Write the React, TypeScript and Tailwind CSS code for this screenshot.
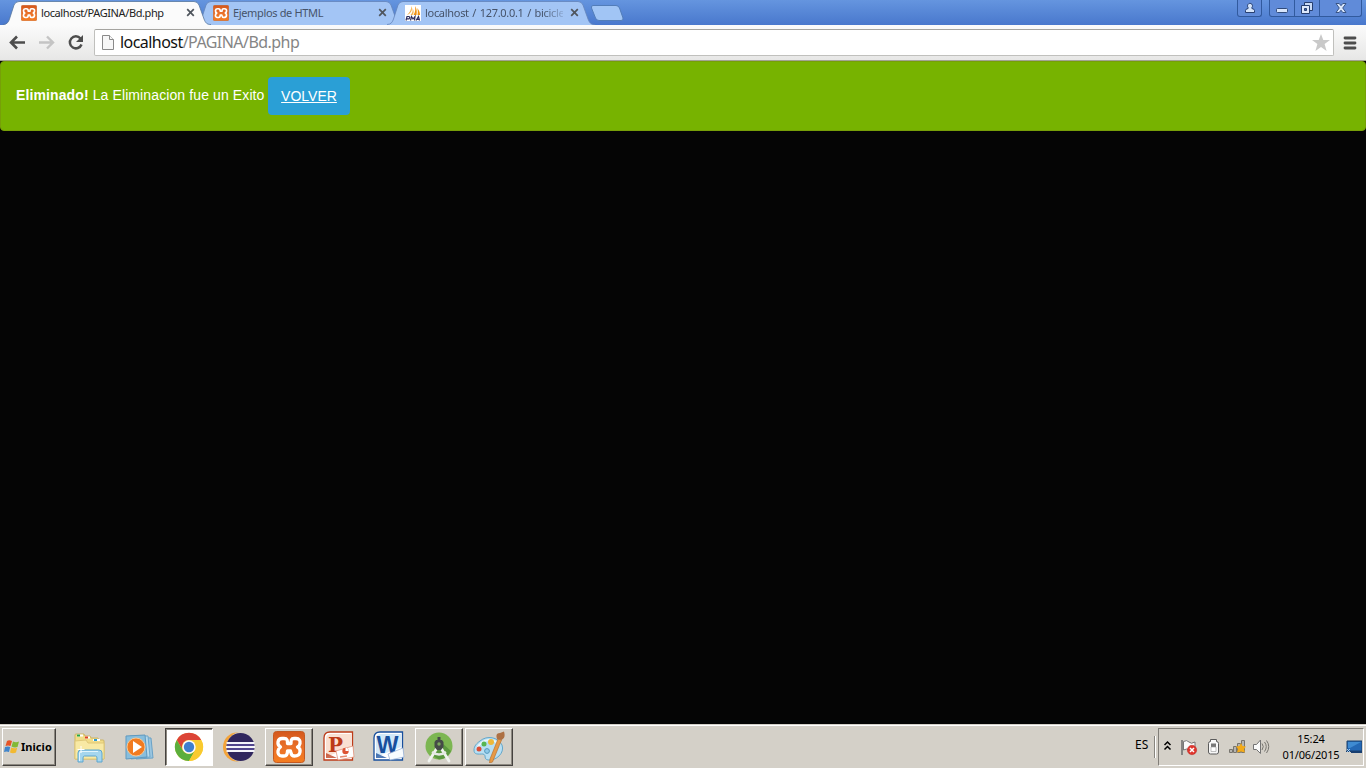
import type { ReactNode } from "react";

const UI = "font-['Noto_Sans','Liberation_Sans',sans-serif]";

function XamppIcon({ className }: { className: string }) {
  return (
    <svg viewBox="0 0 32 32" className={className}>
      <defs>
        <linearGradient id="xo" x1="0" y1="0" x2="0" y2="1">
          <stop offset="0" stopColor="#d4571b" />
          <stop offset="0.5" stopColor="#e9702a" />
          <stop offset="1" stopColor="#f57d1f" />
        </linearGradient>
      </defs>
      <rect x="0.5" y="0.5" width="31" height="31" rx="3" fill="url(#xo)" stroke="#c45a22" />
      <path
        d="M9 7.500H11C14.500 7.500 14.500 9.500 14.500 12.500H18C18 9.500 18 7.500 21 7.500H23C26.500 7.500 27.500 10 27 12.500C26.700 14.300 25.500 15.500 24.500 16C26.500 17 27.500 18.500 27 21C26.500 24 25 25 21.500 25C18 25 18 22.500 17.500 20H14.500C14.500 22.500 14 25 11 25H9C5.500 25 4.700 22 5 20C5.300 18 6.500 16.700 7.500 16C5.500 15 4.700 13.500 5 11C5.400 8.500 7 7.500 9 7.500Z"
        fill="none"
        stroke="#fff"
        strokeWidth="3.3"
        strokeLinejoin="round"
      />
    </svg>
  );
}

function PmaIcon() {
  return (
    <svg viewBox="0 0 16 16" className="size-4 shrink-0">
      <rect width="16" height="16" fill="#fff" />
      <path d="M6.500 1C7.500 4 7 8 2 10C5 7 6 5 6.500 1ZM7.500 3C9 6 9 8 7.500 10H5.500C7.500 8 8 6 7.500 3Z" fill="#f6b04b" />
      <path d="M10 1C12 4 12 7 11.500 10H8.500C10.500 7 10.500 4 10 1ZM12 3C14 5 15 7 15 10H12.500C13 7 13 5 12 3Z" fill="#f29111" />
      <path d="M1 15.500L2 11.500H3.800Q5.500 12 4 13.800H1.800M5.500 15.500L6.500 11.500L8 14L10 11.500L9.500 15.500M11 15.500L13.500 11.500L14.500 15.500M12 14.300H14.300" fill="none" stroke="#2f2f60" strokeWidth="1.2" />
    </svg>
  );
}

function Tab({ title, icon, active, fit, fade }: { title: string; icon: ReactNode; active?: boolean; fit: string; fade?: boolean }) {
  return (
    <div className={`relative flex h-[25px] w-48 shrink-0 items-center ${active ? "z-10" : "z-0"}`}>
      <svg viewBox="0 0 208 25" className="absolute -left-[9px] top-0 h-[25px] w-[208px]">
        <path
          d="M0 25C4 24.500 5.500 22 6.500 19L11 5Q12.500 1.500 16 1.500H191Q194.500 1.500 196 5L201 19C202.500 23 204 24.500 208 25Z"
          fill={active ? "#fbfbfb" : "#a3c5f5"}
        />
        <path
          d="M0 24.500C4 24.500 5.500 22 6.500 19L11 5Q12.500 1.500 16 1.500H191Q194.500 1.500 196 5L201 19C202.500 23 204 24.500 208 24.500"
          fill="none"
          stroke={active ? "#56779e" : "#6485ba"}
          strokeWidth="1"
          opacity="0.8"
        />
      </svg>
      <div className="relative flex w-full items-center pl-[9px]">
        {icon}
        <span
          className={`ml-1 w-[138px] shrink-0 whitespace-nowrap text-[11px] leading-4 ${fit} ${UI} ${
            active ? "text-[#222]" : "text-[#46536a]"
          } ${fade ? "[mask-image:linear-gradient(to_right,black_118px,transparent_143px)]" : ""}`}
        >
          {title}
        </span>
        <svg viewBox="0 0 9 9" className="ml-[7px] size-[9px] shrink-0">
          <path d="M1.200 1.200L7.800 7.800M7.800 1.200L1.200 7.800" stroke="#4f555d" strokeWidth="1.7" />
        </svg>
      </div>
    </div>
  );
}

function WindowControls() {
  return (
    <div className="ml-auto flex h-[17px] items-start gap-[7px] pr-[4px]">
      <div className="flex h-[17px] w-[25px] items-center justify-center rounded-b-[3px] border border-t-0 border-[#315a9e] bg-[#608bd9]">
        <svg viewBox="0 0 12 12" className="size-3">
          <path d="M3.500 3.800A2.500 2.500 0 1 1 7.900 5.500V6.500Q10.500 7 10.500 8.500V10.500H1.500V8.500Q1.500 7 4.100 6.500V5.500Q3.500 5 3.500 3.800Z" fill="#d5e4fa" stroke="#273f70" />
        </svg>
      </div>
      <div className="flex h-[17px] w-[93px] rounded-b-[3px] border border-t-0 border-[#315a9e] bg-[#608bd9]">
        <div className="flex w-[25px] items-center justify-center border-r border-[#315a9e]">
          <svg viewBox="0 0 14 12" className="h-3 w-3.5">
            <rect x="1.500" y="6.500" width="11" height="4" rx="1" fill="#d8e6fc" stroke="#304b7b" />
          </svg>
        </div>
        <div className="flex w-[25px] items-center justify-center border-r border-[#315a9e]">
          <svg viewBox="0 0 14 14" className="size-3.5" fill="#c9dbf6" stroke="#263f70">
            <path d="M4.500 1.500H12.500V9.500H4.500Z" />
            <path d="M1.500 4.500H9.500V12.500H1.500Z" fill="#dce8fb" />
            <path d="M4.500 7.500H6.500V9.500H4.500Z" fill="#416ab0" />
          </svg>
        </div>
        <div className="flex flex-1 items-center justify-center">
          <svg viewBox="0 0 14 12" className="h-3 w-3.5">
            <path d="M2 1.500H5.200L7 3.700L8.800 1.500H12L8.700 6L12 10.500H8.800L7 8.200L5.200 10.500H2L5.300 6Z" fill="#d8e6fc" stroke="#304b7b" strokeWidth="0.900" />
          </svg>
        </div>
      </div>
    </div>
  );
}

function Toolbar() {
  return (
    <div className="flex h-9 items-start border-b border-[#a2a296] bg-gradient-to-b from-[#fbfbfb] to-[#e7e7e6]">
      <svg viewBox="0 0 94 36" className="h-9 w-[94px] shrink-0" fill="none">
        <path d="M25 17.500H12M17 11.500L11 17.500L17 23.500" stroke="#4d4d4d" strokeWidth="2.600" />
        <path d="M39 17.500H52M47 11.500L53 17.500L47 23.500" stroke="#c4c4c4" strokeWidth="2.400" />
        <path d="M80.500 13.500A6 6 0 1 0 81.500 19.500" stroke="#4d4d4d" strokeWidth="2.500" />
        <path d="M83 10V17H76Z" fill="#4d4d4d" />
      </svg>
      <div className="mt-[4px] flex h-[27px] w-[1240px] shrink-0 items-center rounded-[2px] border border-[#c0c0bd] border-t-[#a5a4a0] bg-white">
        <svg viewBox="0 0 12 15" className="ml-[7px] h-[15px] w-3" fill="#f7f7f7" stroke="#8a8a8a">
          <path d="M0.500 0.500H7.500L11.500 4.500V14.500H0.500Z" />
          <path d="M7.500 0.500V4.500H11.500" />
        </svg>
        <span className={`ml-[6px] -translate-y-px whitespace-nowrap text-[16px] leading-6 tracking-[-0.55px] text-[#858585] ${UI}`}>
          <span className="text-[#111]">localhost</span>/PAGINA/Bd.php
        </span>
        <svg viewBox="0 0 18 17" className="ml-auto mr-[3px] h-[17px] w-[18px]">
          <path d="M9 0L11.300 6H18L12.600 10L14.600 17L9 12.900L3.400 17L5.400 10L0 6H6.700Z" fill="#c9c9c9" />
        </svg>
      </div>
      <svg viewBox="0 0 14 14" className="ml-[9px] mt-[11px] h-3.5 w-3.5 shrink-0">
        <path d="M2 2H12M2 7H12M2 12H12" stroke="#4d4d4d" strokeWidth="2.800" strokeLinecap="round" />
      </svg>
    </div>
  );
}

function TaskButton({ kind, children }: { kind?: "raised" | "pressed"; children: ReactNode }) {
  const look =
    kind === "raised"
      ? "border-t-white border-l-white border-b-[#45423f] border-r-[#45423f] shadow-[inset_-1px_-1px_#8c8880]"
      : kind === "pressed"
        ? "border-t-[#45423f] border-l-[#45423f] border-b-white border-r-white bg-white shadow-[inset_1px_1px_#8c8880]"
        : "border-transparent";
  return <div className={`flex h-[38px] w-12 shrink-0 items-center justify-center border ${look}`}>{children}</div>;
}

function FolderIcon() {
  return (
    <svg viewBox="0 0 32 32" className="size-8">
      <path d="M2 4Q2 3 3 3H11L12 5H17L18 7H25L26 9H30Q31 9 31 10V28H2Z" fill="#f1dc87" stroke="#ceb566" />
      <path d="M4 4.500H10M12 6.500H17M20 9H27" stroke="#fff" strokeWidth="2" />
      <path d="M4 4.500H7" stroke="#25a547" strokeWidth="2" />
      <path d="M12 6.500H15" stroke="#df4325" strokeWidth="2" />
      <path d="M21 9H24" stroke="#2e9bd0" strokeWidth="2" />
      <path d="M2 10L13 9L15 12H31V28H2Z" fill="#f8e9a4" stroke="#dfc878" />
      <path d="M5 31V22Q5 19 8 19H26Q29 19 29 22V31H24V27Q24 25 22.500 25H11.500Q10 25 10 27V31Z" fill="#a5d6ee" stroke="#5da6cf" />
      <path d="M6.500 30V22Q6.500 20.500 9 20.500H25" fill="none" stroke="#e2f5fc" />
      <path d="M8 15V22M4.500 18.500H11.500" stroke="#fff" />
    </svg>
  );
}

function PlayerIcon() {
  return (
    <svg viewBox="0 0 32 32" className="size-8">
      <path d="M10 6L28 7L30 27L13 28Z" fill="#9ac5df" stroke="#6aa2c7" />
      <path d="M7 5L25 5L27 26L8 28Z" fill="#b5d9eb" stroke="#6da7cb" />
      <path d="M3 5L22 4L24 26L3 28Z" fill="#87bedd" stroke="#6099bf" />
      <circle cx="13" cy="16" r="9" fill="#f17b20" stroke="#fbc68f" />
      <path d="M10 10L19 16L10 22Z" fill="#fff" />
    </svg>
  );
}

function ChromeIcon() {
  return (
    <svg viewBox="0 0 32 32" className="size-8">
      <circle cx="16" cy="16" r="14" fill="#ffd43b" />
      <path d="M3.800 9A14 14 0 0 1 28.200 9H16A7 7 0 0 0 9.900 19.500Z" fill="#dc4437" />
      <path d="M3.800 9A14 14 0 0 0 16 30L22 19.500A7 7 0 0 1 9.900 19.500Z" fill="#5bae3c" />
      <path d="M16 9H28.200A14 14 0 0 1 16 30L22 19.500Q25 14 16 9Z" fill="#f9ca2f" />
      <circle cx="16" cy="16" r="6.700" fill="#f8fafc" />
      <circle cx="16" cy="16" r="5.200" fill="#3f7fce" />
    </svg>
  );
}

function EclipseIcon() {
  return (
    <svg viewBox="0 0 32 32" className="size-8">
      <ellipse cx="14" cy="16" rx="14" ry="14.500" fill="#f4a43a" />
      <circle cx="18.500" cy="16" r="15" fill="#d4d0c8" />
      <circle cx="17.500" cy="16" r="14" fill="#30265e" />
      <path d="M4 11H31V21H4Z" fill="#51458d" />
      <path d="M3.500 12H31.500M3 16H32M3.500 20H31.500" stroke="#f4f4fb" strokeWidth="2" />
    </svg>
  );
}

function OfficeIcon({ letter, color, light }: { letter: string; color: string; light: string }) {
  return (
    <svg viewBox="0 0 32 32" className="size-8">
      <path d="M1 7Q1 1 7 1H29.500V29H1Z" fill="#fff" stroke={color} strokeWidth="1.300" />
      <path d="M3 8Q3 3 8 3H28V16L3 26Z" fill={light} />
      <path d="M3 22L14 27H3Z" fill={color} opacity="0.75" />
      {letter === "P" ? (
        <text x="5" y="21" fontSize="21" fontWeight="700" fontFamily="DejaVu Serif, serif" textLength="15" lengthAdjust="spacingAndGlyphs" fill={color}>
          P
        </text>
      ) : (
        <text x="3.500" y="22" fontSize="23" fontWeight="700" fontFamily="Liberation Sans, sans-serif" textLength="22" lengthAdjust="spacingAndGlyphs" fill={color}>
          W
        </text>
      )}
      {letter === "P" ? (
        <g>
          <path d="M13 20L30 15L31 26L15 29Z" fill="#fff" stroke="#e18a70" strokeWidth="0.700" />
          <circle cx="22.500" cy="20" r="3.200" fill="#dd5535" />
          <path d="M22.500 20V16.800A3.200 3.200 0 0 1 25.700 20Z" fill="#fff" />
          <path d="M17 26L24 25" stroke="#e48b70" strokeWidth="1.500" />
        </g>
      ) : (
        <path d="M15 23L30 17L31 26L17 29Z" fill="#f8fcff" stroke="#93aed4" strokeWidth="0.700" />
      )}
    </svg>
  );
}

function StudioIcon() {
  return (
    <svg viewBox="0 0 32 32" className="size-8">
      <circle cx="16" cy="15" r="13.500" fill="#7cb651" />
      <path d="M18 11L28 20Q24 28 16 28.500L10 25Z" fill="#5c9840" />
      <path d="M14 17L6 30M18 17L26 30" stroke="#f0f3ef" strokeWidth="2.800" strokeLinecap="round" />
      <path d="M9 21Q16 26 23 21" fill="none" stroke="#e5e9e4" strokeWidth="2.300" />
      <path d="M14.500 6H17.500V9H19L20.500 11V16L18 19H14L11.500 16V11L13 9H14.500Z" fill="#454b48" />
      <circle cx="16" cy="13" r="1.700" fill="#7aa85b" />
    </svg>
  );
}

function PaintIcon() {
  return (
    <svg viewBox="0 0 32 32" className="size-8">
      <path d="M7 10C14 4 25 6 29 14C32 22 23 30 15 29C10 28 14 24 10 23C5 23 1 24 1 19C1 15 4 12 7 10Z" fill="#b8dff3" stroke="#63a7ca" />
      <path d="M4 18Q7 10 16 9Q24 9 26 15" fill="none" stroke="#e8f8ff" strokeWidth="2" />
      <circle cx="6" cy="18" r="2.500" fill="#db4c35" />
      <circle cx="11" cy="13" r="2.500" fill="#57b652" />
      <circle cx="18" cy="11" r="3" fill="#edb93b" />
      <circle cx="14" cy="20" r="2.400" fill="#8fcaea" stroke="#5598bb" />
      <path d="M25 8L28.500 9L19.500 31L16.500 32L17 28Z" fill="#e79a46" stroke="#b87332" strokeWidth="0.700" />
      <path d="M24 8Q22 2 27 2L31 0.500Q33 7 28.500 9Z" fill="#ad7043" />
    </svg>
  );
}

function Tray() {
  return (
    <div className="ml-auto flex items-center">
      <span className={`mr-[4px] w-[15px] -translate-y-[2px] text-[12px] leading-4 text-black ${UI}`}>ES</span>
      <div className="mr-[2px] h-[22px] w-[2px] border-l border-r border-l-[#88857e] border-r-white" />
      <div className="mr-[2px] flex h-[38px] w-[206px] items-center border border-b-white border-l-[#817e78] border-r-white border-t-[#817e78]">
        <svg viewBox="0 0 114 36" className="h-9 w-[114px] shrink-0">
          <path d="M5.500 16L8.500 13L11.500 16M5.500 20.500L8.500 17.500L11.500 20.500" fill="none" stroke="#000" strokeWidth="1.500" />
          <path d="M23 11V26" stroke="#6b6b6b" strokeWidth="1.500" />
          <path d="M24.500 12.500Q28 10.500 30 13T36 13V21Q32 23 30 21T24.500 21Z" fill="#fafafa" stroke="#777" />
          <circle cx="33" cy="21" r="4.700" fill="#df352d" stroke="#b62822" strokeWidth="0.500" />
          <path d="M31 19L35 23M35 19L31 23" stroke="#fff" strokeWidth="1.500" />
          <path d="M51.500 10.500H57.500V12.500Q59.500 12.500 59.500 14.500V23Q59.500 25 57.500 25H51.500Q49.500 25 49.500 23V14.500Q49.500 12.500 51.500 12.500Z" fill="#f8f8f8" stroke="#5b5b5b" />
          <path d="M52 14.500H57V18H52Z" fill="#777" />
          <path d="M52 18H57V22.500H52Z" fill="#fff" stroke="#999" strokeWidth="0.600" />
          <path d="M70.500 20.500H73.500V23.500H70.500ZM74.500 17.500H77.500V23.500H74.500ZM78.500 14.500H81.500V23.500H78.500ZM82.500 11.500H85.500V23.500H82.500Z" fill="#b6b5b0" stroke="#77746e" />
          <path d="M82 14L83.500 17L87 17.500L85 20L86 23.500L82 22.500L78 23.500L79 20L77 17.500L80.500 17Z" fill="#f3aa18" />
          <path d="M94.500 15.500H97.500L101.500 11V24.500L97.500 20.500H94.500Z" fill="#fafafa" stroke="#737373" />
          <path d="M103 14.500Q105.500 17.500 103 21M105.500 13Q109 17.500 105.500 22.500M107.500 11.500Q112 17.500 107.500 24" fill="none" stroke="#77756f" strokeWidth="1" />
        </svg>
        <div className={`ml-[6px] flex w-[64px] flex-col items-center whitespace-nowrap text-[11px] leading-4 text-black ${UI}`}>
          <span className="tracking-[-0.1px]">15:24</span>
          <span className="tracking-[-0.15px]">01/06/2015</span>
        </div>
        <svg viewBox="0 0 16 14" className="ml-[3px] mt-[1px] h-3.5 w-4 shrink-0">
          <path d="M1 1H16V11H1Z" fill="#2468b5" stroke="#1a406d" />
          <path d="M2 2H15L4 8H2Z" fill="#3f8bd2" />
          <path d="M0 11H16V13H5V12H0Z" fill="#173e70" />
          <path d="M1 9L4 12M4 9L1 12" stroke="#bce2ff" strokeWidth="0.800" />
        </svg>
      </div>
    </div>
  );
}

function Taskbar() {
  return (
    <footer className="flex h-11 shrink-0 items-center border-t border-[#d4d0c8] bg-[#d4d0c8] shadow-[inset_0_1px_white]">
      <button className={`ml-[2px] flex h-[38px] w-[54px] shrink-0 items-center border border-b-[#45423f] border-l-white border-r-[#45423f] border-t-white pl-[1px] shadow-[inset_-1px_-1px_#8c8880] ${UI}`}>
        <svg viewBox="0 0 16 16" className="size-4 shrink-0">
          <path d="M3 2Q5 .5 8 2L6.500 7Q4 6 1.500 7Z" fill="#e75426" />
          <path d="M9 2.500Q12 4 15 2.500L13.500 8Q10.500 9 7.500 7.500Z" fill="#82b936" />
          <path d="M1 8Q4 7 6.200 8L5 13Q2.500 12 0 13Z" fill="#4185cb" />
          <path d="M7.200 8.500Q10 10 13.200 8.800L12 13.500Q9 15 6 13.500Z" fill="#f2b931" />
        </svg>
        <span className="ml-[1px] translate-y-px text-[11px] font-bold tracking-[0.05px] text-black">Inicio</span>
      </button>
      <div className="ml-[9px] flex gap-[2px]">
        <TaskButton><FolderIcon /></TaskButton>
        <TaskButton><PlayerIcon /></TaskButton>
        <TaskButton kind="pressed"><ChromeIcon /></TaskButton>
        <TaskButton><EclipseIcon /></TaskButton>
        <TaskButton kind="raised"><XamppIcon className="size-8" /></TaskButton>
        <TaskButton><OfficeIcon letter="P" color="#bd3b18" light="#fae0d2" /></TaskButton>
        <TaskButton><OfficeIcon letter="W" color="#174f9d" light="#d2e8f8" /></TaskButton>
        <TaskButton kind="raised"><StudioIcon /></TaskButton>
        <TaskButton kind="raised"><PaintIcon /></TaskButton>
      </div>
      <Tray />
    </footer>
  );
}

export default function App() {
  return (
    <div className="flex h-screen w-full flex-col overflow-hidden bg-[#050505]">
      <header className="shrink-0">
        <div className="flex h-[25px] items-start bg-gradient-to-b from-[#6595df] to-[#4978cd] pl-3">
          <Tab active fit="tracking-[-0.4px]" title="localhost/PAGINA/Bd.php" icon={<XamppIcon className="size-4 shrink-0" />} />
          <Tab fit="tracking-[-0.35px]" title="Ejemplos de HTML" icon={<XamppIcon className="size-4 shrink-0" />} />
          <Tab fade fit="tracking-[-0.3px] [word-spacing:1px]" title="localhost / 127.0.0.1 / bicicle" icon={<PmaIcon />} />
          <svg viewBox="0 0 34 17" className="ml-[2px] mt-[5px] h-[17px] w-[34px]">
            <path d="M3 .5H26Q28.500 .5 29.500 3L33 13Q33.500 15.500 31 15.500H9Q6.500 15.500 5.500 13L1.500 3Q1 .5 3 .5Z" fill="#a1c5f5" stroke="#527db9" />
          </svg>
          <WindowControls />
        </div>
        <Toolbar />
      </header>
      <main className="min-h-0 flex-1 font-['Liberation_Sans',sans-serif]">
        <div className="flex h-[70px] items-center rounded-[4px] border border-[#779f08] bg-[#77b300] pl-[15px] text-[14px] text-white">
          <p className="w-[248px] whitespace-nowrap pb-[2px] tracking-[0.11px]">
            <strong>Eliminado!</strong> La Eliminacion fue un Exito
          </p>
          <a className="ml-1 flex h-[38px] w-[82px] items-center justify-center rounded-[4px] bg-[#2a9fd6] underline">VOLVER</a>
        </div>
      </main>
      <Taskbar />
    </div>
  );
}
